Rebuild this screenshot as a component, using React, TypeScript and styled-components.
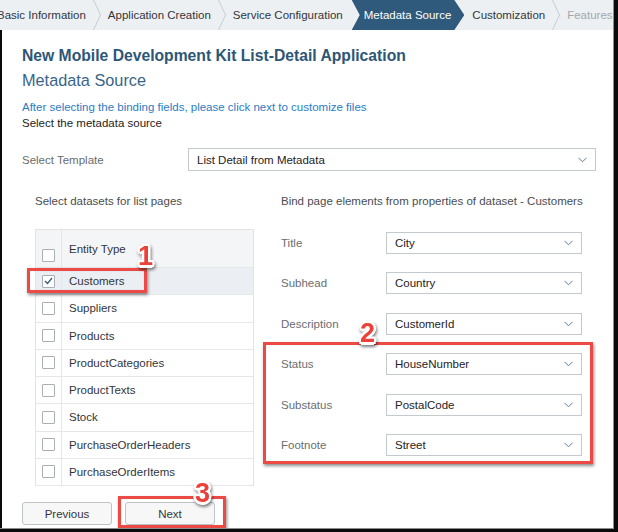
import React from "react";
import styled, { createGlobalStyle, css } from "styled-components";

const GlobalStyle = createGlobalStyle`
  html, body {
    margin: 0;
    padding: 0;
    background: #0b0b0b;
  }
  body {
    font-family: "Liberation Sans", Arial, sans-serif;
    font-size: 11.5px;
    color: #32363a;
  }
`;

const Window = styled.div`
  position: relative;
  width: 613px;
  height: 528px;
  background: #ffffff;
  border-right: 1px solid #8e8e8e;
  border-bottom: 1px solid #8e8e8e;
  overflow: hidden;
  display: flex;
  flex-direction: column;
`;

const StepBar = styled.nav`
  flex: 0 0 30px;
  display: flex;
  align-items: stretch;
  background: #edf0f3;
  margin-left: -10px;
  white-space: nowrap;
`;

const Step = styled.div<{ $active?: boolean; $disabled?: boolean }>`
  display: flex;
  align-items: center;
  padding: 0 7px;
  color: ${(p) => (p.$disabled ? "#a3a8ad" : "#32363a")};
  ${(p) =>
    p.$active &&
    css`
      background: #2f5a7b;
      color: #ffffff;
      padding: 0 13px 0 12px;
      margin: 0 1px 0 2px;
      clip-path: polygon(
        0 0,
        calc(100% - 10px) 0,
        100% 50%,
        calc(100% - 10px) 100%,
        0 100%,
        8px 50%
      );
    `}
`;

const Main = styled.main`
  flex: 1;
  display: flex;
  flex-direction: column;
  border-left: 2px solid #0b0b0b;
  padding: 0 8px 0 20px;
`;

const Title = styled.h1`
  margin: 16px 0 0;
  font-size: 15.7px;
  line-height: 20px;
  font-weight: bold;
  color: #2d5677;
`;

const Subtitle = styled.h2`
  margin: 4px 0 0;
  font-size: 16.3px;
  line-height: 20px;
  font-weight: normal;
  color: #3a6589;
`;

const Hint = styled.p`
  margin: 9px 0 0;
  line-height: 16px;
  color: #2b7cc4;
`;

const Plain = styled.p`
  margin: 0;
  line-height: 16px;
  color: #1d1d1d;
`;

const FieldRow = styled.div<{ $top?: number }>`
  display: flex;
  align-items: center;
  margin-top: ${(p) => p.$top ?? 0}px;
`;

const FieldLabel = styled.label<{ $width: number }>`
  width: ${(p) => p.$width}px;
  flex-shrink: 0;
  color: #6a6d70;
`;

const SelectBox = styled.div<{ $width: number; $height: number }>`
  box-sizing: border-box;
  display: flex;
  align-items: center;
  justify-content: space-between;
  flex-shrink: 0;
  width: ${(p) => p.$width}px;
  height: ${(p) => p.$height}px;
  padding: 0 8px 0 8px;
  border: 1px solid #c4c9ce;
  background: #ffffff;
  color: #1f2225;
`;

const Columns = styled.div`
  display: grid;
  grid-template-columns: 219px 301px;
  column-gap: 27px;
  align-items: start;
  margin-top: 22px;
  padding-left: 13px;
`;

const Column = styled.section`
  display: flex;
  flex-direction: column;
`;

const Heading = styled.div`
  line-height: 16px;
  color: #4a4d50;
  white-space: nowrap;
`;

const TableFrame = styled.div`
  box-sizing: border-box;
  height: 257px;
  margin-top: 20px;
  overflow: hidden;
  border: 1px solid #e1e4e7;
  border-bottom: none;
`;

const TableRow = styled.div<{ $header?: boolean; $selected?: boolean }>`
  box-sizing: border-box;
  display: flex;
  height: ${(p) => (p.$header ? "38px" : "27.25px")};
  border-bottom: 1px solid #e5e7e9;
  background: ${(p) => (p.$header ? "#f4f5f6" : p.$selected ? "#ebeff3" : "#ffffff")};
  align-items: ${(p) => (p.$header ? "flex-start" : "center")};
`;

const CheckCell = styled.div<{ $header?: boolean }>`
  box-sizing: border-box;
  width: 26px;
  align-self: stretch;
  flex-shrink: 0;
  display: flex;
  justify-content: center;
  align-items: ${(p) => (p.$header ? "flex-start" : "center")};
  padding-top: ${(p) => (p.$header ? "19px" : "0")};
  border-right: 1px solid #e5e7e9;
`;

const NameCell = styled.div<{ $header?: boolean }>`
  padding-left: 7px;
  padding-top: ${(p) => (p.$header ? "11px" : "0")};
  line-height: 16px;
  color: #32363a;
`;

const Checkbox = styled.span`
  box-sizing: border-box;
  width: 13px;
  height: 13px;
  border: 1px solid #a9afb5;
  border-radius: 1px;
  background: #ffffff;
  display: flex;
  align-items: center;
  justify-content: center;
`;

const Form = styled.div`
  display: flex;
  flex-direction: column;
  gap: 18.4px;
  margin-top: 23px;
`;

const Footer = styled.div`
  display: flex;
  gap: 13px;
  margin-top: 16px;
`;

const Button = styled.button`
  box-sizing: border-box;
  width: 90px;
  height: 23px;
  border: 1px solid #bfc3c7;
  border-radius: 3px;
  background: #f7f7f7;
  color: #32363a;
  font-family: inherit;
  font-size: 11.5px;
`;

const Highlight = styled.div<{ $x: number; $y: number; $w: number; $h: number }>`
  position: absolute;
  box-sizing: border-box;
  left: ${(p) => p.$x}px;
  top: ${(p) => p.$y}px;
  width: ${(p) => p.$w}px;
  height: ${(p) => p.$h}px;
  border: 3px solid #ec4a44;
  box-shadow: 1px 2px 3px rgba(0, 0, 0, 0.45), inset 0 0 1px rgba(0, 0, 0, 0.2);
  pointer-events: none;
`;

const Badge = styled.span<{ $x: number; $y: number }>`
  position: absolute;
  left: ${(p) => p.$x}px;
  top: ${(p) => p.$y}px;
  font-family: "Liberation Sans", Arial, sans-serif;
  font-weight: bold;
  font-size: 27px;
  line-height: 27px;
  color: #ec4038;
  text-shadow: 2.5px 0 0 #fff, -2.5px 0 0 #fff, 0 2.5px 0 #fff, 0 -2.5px 0 #fff,
    1.8px 1.8px 0 #fff, -1.8px 1.8px 0 #fff, 1.8px -1.8px 0 #fff,
    -1.8px -1.8px 0 #fff;
  filter: drop-shadow(1px 2px 1.5px rgba(0, 0, 0, 0.5));
`;

const Separator = () => (
  <svg width="8" height="30" viewBox="0 0 8 30" style={{ flexShrink: 0 }}>
    <polyline points="0.5,0 7.5,15 0.5,30" fill="none" stroke="#c7ccd1" strokeWidth="1" />
  </svg>
);

const Chevron = () => (
  <svg width="9" height="6" viewBox="0 0 9 6">
    <polyline points="0.5,0.8 4.5,4.8 8.5,0.8" fill="none" stroke="#5d7a94" strokeWidth="1" />
  </svg>
);

const Tick = () => (
  <svg width="9" height="8" viewBox="0 0 9 8">
    <polyline points="1,4 3.5,6.5 8,1" fill="none" stroke="#2f5a7b" strokeWidth="1.2" />
  </svg>
);

const steps = [
  { label: "Basic Information" },
  { label: "Application Creation" },
  { label: "Service Configuration" },
  { label: "Metadata Source", active: true },
  { label: "Customization" },
  { label: "Features", disabled: true },
];

const entities = [
  "Customers",
  "Suppliers",
  "Products",
  "ProductCategories",
  "ProductTexts",
  "Stock",
  "PurchaseOrderHeaders",
  "PurchaseOrderItems",
  "SalesOrderHeaders",
];

const bindings = [
  { label: "Title", value: "City" },
  { label: "Subhead", value: "Country" },
  { label: "Description", value: "CustomerId" },
  { label: "Status", value: "HouseNumber" },
  { label: "Substatus", value: "PostalCode" },
  { label: "Footnote", value: "Street" },
];

export default function App() {
  return (
    <>
      <GlobalStyle />
      <Window>
        <StepBar>
          {steps.map((s, i) => (
            <React.Fragment key={s.label}>
              {i > 0 && !s.active && !steps[i - 1].active && <Separator />}
              <Step $active={s.active} $disabled={s.disabled}>
                {s.label}
              </Step>
            </React.Fragment>
          ))}
        </StepBar>

        <Main>
          <Title>New Mobile Development Kit List-Detail Application</Title>
          <Subtitle>Metadata Source</Subtitle>
          <Hint>After selecting the binding fields, please click next to customize files</Hint>
          <Plain>Select the metadata source</Plain>

          <FieldRow $top={17}>
            <FieldLabel $width={166}>Select Template</FieldLabel>
            <SelectBox $width={408} $height={23}>
              List Detail from Metadata
              <Chevron />
            </SelectBox>
          </FieldRow>

          <Columns>
            <Column>
              <Heading>Select datasets for list pages</Heading>
              <TableFrame>
                <TableRow $header>
                  <CheckCell $header>
                    <Checkbox />
                  </CheckCell>
                  <NameCell $header>Entity Type</NameCell>
                </TableRow>
                {entities.map((name, i) => (
                  <TableRow key={name} $selected={i === 0}>
                    <CheckCell>
                      <Checkbox>{i === 0 && <Tick />}</Checkbox>
                    </CheckCell>
                    <NameCell>{name}</NameCell>
                  </TableRow>
                ))}
              </TableFrame>
            </Column>

            <Column>
              <Heading>Bind page elements from properties of dataset - Customers</Heading>
              <Form>
                {bindings.map((b) => (
                  <FieldRow key={b.label}>
                    <FieldLabel $width={105}>{b.label}</FieldLabel>
                    <SelectBox $width={196} $height={22}>
                      {b.value}
                      <Chevron />
                    </SelectBox>
                  </FieldRow>
                ))}
              </Form>
            </Column>
          </Columns>

          <Footer>
            <Button>Previous</Button>
            <Button>Next</Button>
          </Footer>
        </Main>

        <Highlight $x={27} $y={268} $w={120} $h={25} />
        <Highlight $x={263} $y={342} $w={330} $h={122} />
        <Highlight $x={118} $y={496} $w={108} $h={32} />
        <Badge $x={138} $y={243}>1</Badge>
        <Badge $x={360} $y={320}>2</Badge>
        <Badge $x={195} $y={480}>3</Badge>
      </Window>
    </>
  );
}
